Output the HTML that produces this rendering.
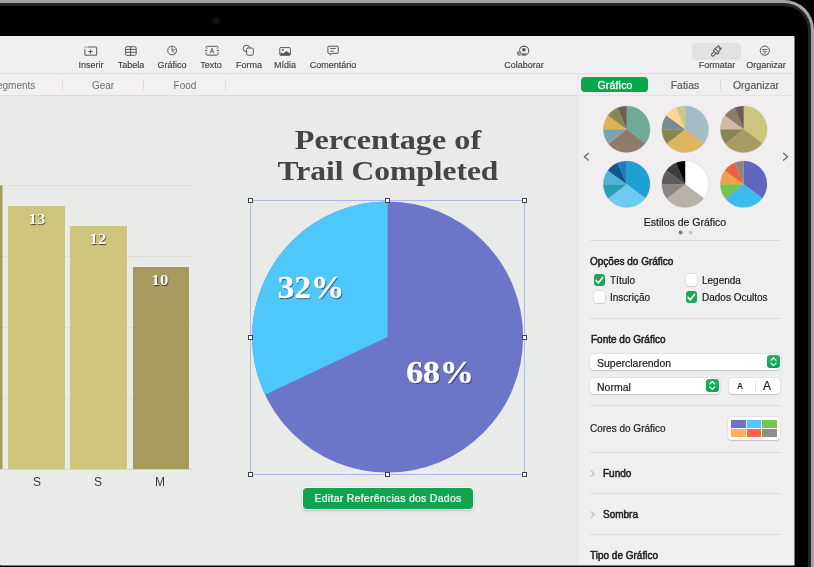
<!DOCTYPE html>
<html><head><meta charset="utf-8"><style>
html,body{margin:0;padding:0}
body{width:814px;height:567px;overflow:hidden;background:#000;position:relative;font-family:"Liberation Sans",sans-serif}
.a{position:absolute}
.t{position:absolute;white-space:nowrap;line-height:1;will-change:transform}
svg{position:absolute;left:0;top:0}
</style></head><body>
<div class="a" style="left:-200px;top:0;width:1014px;height:800px;border-radius:30px;background:linear-gradient(#aeaeb2 0,#9c9ca0 1.5px,#aaaaae 3px,#a4a4a8 40px)"></div>
<div class="a" style="left:-200px;top:3px;width:1010.5px;height:800px;border-radius:27px;background:#242526"></div>
<div class="a" style="left:-200px;top:6px;width:1007.8px;height:800px;border-radius:24px;background:#000"></div>
<div class="a" style="left:212px;top:16.5px;width:8px;height:8px;border-radius:50%;background:#0d0d0d"></div>
<div class="a" style="left:214.5px;top:19px;width:3px;height:3px;border-radius:50%;background:#151822"></div>
<div class="a" style="left:0;top:36px;width:793.5px;height:528.6px;background:#e9ebe8;box-shadow:0.5px 0.5px 0 #f6f6f6"></div>
<div class="a" style="left:0;top:36px;width:793.5px;height:37px;background:#eff0f2;border-bottom:1px solid #dcdcde"></div>
<div class="a" style="left:0;top:74px;width:577px;height:21px;background:#f3f0f1;border-bottom:1px solid #dedcdc"></div>
<div class="a" style="left:576.5px;top:74px;width:216px;height:490.6px;background:#f1eeef;border-left:1px solid #e6e3e4"></div>
<div class="a" style="left:577px;top:95px;width:216.5px;height:1px;background:#e4e1e2"></div>
<div class="a" style="left:692px;top:42.5px;width:48.5px;height:17.5px;border-radius:4px;background:#e2e2e4"></div>
<div class="t" style="left:90.9px;top:60.88px;font-size:9px;color:#3f3f3f;font-family:'Liberation Sans', sans-serif;font-weight:400;transform:translateX(-50%);-webkit-text-stroke:0.15px #3f3f3f;">Inserir</div>
<div class="t" style="left:130.9px;top:60.88px;font-size:9px;color:#3f3f3f;font-family:'Liberation Sans', sans-serif;font-weight:400;transform:translateX(-50%);-webkit-text-stroke:0.15px #3f3f3f;">Tabela</div>
<div class="t" style="left:172.2px;top:60.88px;font-size:9px;color:#3f3f3f;font-family:'Liberation Sans', sans-serif;font-weight:400;transform:translateX(-50%);-webkit-text-stroke:0.15px #3f3f3f;">Gráfico</div>
<div class="t" style="left:211.4px;top:60.88px;font-size:9px;color:#3f3f3f;font-family:'Liberation Sans', sans-serif;font-weight:400;transform:translateX(-50%);-webkit-text-stroke:0.15px #3f3f3f;">Texto</div>
<div class="t" style="left:248.5px;top:60.88px;font-size:9px;color:#3f3f3f;font-family:'Liberation Sans', sans-serif;font-weight:400;transform:translateX(-50%);-webkit-text-stroke:0.15px #3f3f3f;">Forma</div>
<div class="t" style="left:285.4px;top:60.88px;font-size:9px;color:#3f3f3f;font-family:'Liberation Sans', sans-serif;font-weight:400;transform:translateX(-50%);-webkit-text-stroke:0.15px #3f3f3f;">Mídia</div>
<div class="t" style="left:332.7px;top:60.88px;font-size:9px;color:#3f3f3f;font-family:'Liberation Sans', sans-serif;font-weight:400;transform:translateX(-50%);-webkit-text-stroke:0.15px #3f3f3f;">Comentário</div>
<div class="t" style="left:524.2px;top:60.88px;font-size:9px;color:#3f3f3f;font-family:'Liberation Sans', sans-serif;font-weight:400;transform:translateX(-50%);-webkit-text-stroke:0.15px #3f3f3f;">Colaborar</div>
<div class="t" style="left:716.7px;top:60.88px;font-size:9px;color:#3f3f3f;font-family:'Liberation Sans', sans-serif;font-weight:400;transform:translateX(-50%);-webkit-text-stroke:0.15px #3f3f3f;">Formatar</div>
<div class="t" style="left:765.5px;top:60.88px;font-size:9px;color:#3f3f3f;font-family:'Liberation Sans', sans-serif;font-weight:400;transform:translateX(-50%);-webkit-text-stroke:0.15px #3f3f3f;">Organizar</div>
<svg width="814" height="567" fill="none" stroke="#555555" stroke-width="1">
<path d="M84.9 49.3v5.9h11.8v-7.4a0.8 0.8 0 0 0-0.8-0.8h-8.6 M90.5 49.3v4.4 M88.3 51.5h4.4"/><path d="M84.9 48.3v-1.3h1.6" stroke="#9a9a9a"/>
<rect x="125.4" y="46.7" width="10.8" height="8.6" rx="1.6"/>
<path d="M125.4 49.4h10.8 M125.4 52.3h10.8 M130.6 46.7v8.6"/>
<circle cx="172.1" cy="50.5" r="4.4"/>
<path d="M172 46.2v4.4l2.9 2.9 M172.1 50.5l3-1.3" stroke-width="0.9"/>
<path d="M206.1 48.6v-1a1.3 1.3 0 0 1 1.3-1.3h9.3a1.3 1.3 0 0 1 1.3 1.3v1 M206.1 52.3v1.6a1.3 1.3 0 0 0 1.3 1.3h9.3a1.3 1.3 0 0 0 1.3-1.3v-1.6 M205 50.5h1.9 M217.1 50.5h1.9"/>
<path d="M210.1 53.3l1.9-5.2 1.9 5.2 M210.8 51.6h2.4" stroke-width="0.8"/>
<circle cx="246.5" cy="48.5" r="3.3"/>
<rect x="246.6" y="48" width="6.7" height="7.2" rx="1.4" fill="#eff0f2"/>
<rect x="279.8" y="47.6" width="10.6" height="7.6" rx="0.8"/>
<circle cx="282.8" cy="50.1" r="1" fill="#555555" stroke="none"/>
<path d="M280 55.2v-1.3l1.8-1.3 1.3 0.8 3.5-2.5 3.6 2.8v1.5z" fill="#555555" stroke="none"/>
<path d="M328.9 46.2h8.3a1 1 0 0 1 1 1v5.2a1 1 0 0 1-1 1h-5.3l-1.6 1.7v-1.7h-1.4a1 1 0 0 1-1-1v-5.2a1 1 0 0 1 1-1z" stroke-linejoin="round"/>
<path d="M330.2 48.5h5.5 M330.2 51.2h3.6" stroke-width="0.9"/>
<circle cx="524.1" cy="50.7" r="4.6" stroke-width="1.05"/>
<circle cx="523.9" cy="49.8" r="1.8" fill="#555555" stroke="none"/>
<path d="M521.8 55.3v-1.3c0.6-0.9 4.2-0.9 5.2 0z" fill="#555555" stroke="none"/>
<circle cx="519.3" cy="53.4" r="2.9" fill="#eff0f2" stroke="none"/>
<circle cx="519.3" cy="53.4" r="1.9" stroke-width="1"/>
<path d="M519.3 52.5v1.8 M518.4 53.4h1.8" stroke-width="0.7"/>
<circle cx="764.8" cy="50.7" r="4.6"/>
<path d="M762 49.5h5.6 M762.6 51.3h4.4 M763.6 53h2.4" stroke-width="0.8"/>
<g transform="translate(716.2 51.4) rotate(45)" stroke-linejoin="round">
<path d="M-2.8 -1.2h5.6v2.4h-5.6z"/>
<path d="M-2.8 -1.2l0.6-4.6h0.8l1.4 1.5 0.9-1.5h0.5l0.5 4.6"/>
<path d="M-1.3 1.2v3.6a1.3 1.3 0 0 0 2.6 0v-3.6"/>
</g>
</svg>
<div class="a" style="left:62px;top:79px;width:1px;height:12px;background:#e0dcdd"></div>
<div class="a" style="left:143.3px;top:79px;width:1px;height:12px;background:#e0dcdd"></div>
<div class="a" style="left:224.5px;top:79px;width:1px;height:12px;background:#e0dcdd"></div>
<div class="t" style="left:-3.5px;top:80.73px;font-size:10px;color:#707070;font-family:'Liberation Sans', sans-serif;font-weight:400;">egments</div>
<div class="t" style="left:103px;top:80.73px;font-size:10px;color:#707070;font-family:'Liberation Sans', sans-serif;font-weight:400;transform:translateX(-50%);">Gear</div>
<div class="t" style="left:184.5px;top:80.73px;font-size:10px;color:#707070;font-family:'Liberation Sans', sans-serif;font-weight:400;transform:translateX(-50%);">Food</div>
<div class="a" style="left:580.5px;top:76.5px;width:67px;height:15.5px;border-radius:4px;background:#0aa54d"></div>
<div class="t" style="left:614.5px;top:79.71px;font-size:10.5px;color:#fff;font-family:'Liberation Sans', sans-serif;font-weight:400;transform:translateX(-50%);letter-spacing:0.2px;-webkit-text-stroke:0.3px #fff;">Gráfico</div>
<div class="t" style="left:685px;top:79.71px;font-size:10.5px;color:#555;font-family:'Liberation Sans', sans-serif;font-weight:400;transform:translateX(-50%);-webkit-text-stroke:0.15px #555;">Fatias</div>
<div class="t" style="left:756px;top:79.71px;font-size:10.5px;color:#555;font-family:'Liberation Sans', sans-serif;font-weight:400;transform:translateX(-50%);-webkit-text-stroke:0.15px #555;">Organizar</div>
<div class="a" style="left:720px;top:79px;width:1px;height:11px;background:#dcd9da"></div>
<svg width="814" height="567"><circle cx="626.7" cy="129.3" r="23.8" fill="#d9d5d5"/><path d="M626.70 129.30L626.70 106.00A23.3 23.3 0 0 1 645.31 143.32Z" fill="#6fa998"/><path d="M626.70 129.30L645.31 143.32A23.3 23.3 0 0 1 608.34 143.64Z" fill="#8e7b6c"/><path d="M626.70 129.30L608.34 143.64A23.3 23.3 0 0 1 603.40 129.30Z" fill="#7ea2b0"/><path d="M626.70 129.30L603.40 129.30A23.3 23.3 0 0 1 607.85 115.60Z" fill="#dcb457"/><path d="M626.70 129.30L607.85 115.60A23.3 23.3 0 0 1 617.60 107.85Z" fill="#87874f"/><path d="M626.70 129.30L617.60 107.85A23.3 23.3 0 0 1 626.70 106.00Z" fill="#6b5e54"/><circle cx="685.2" cy="129.3" r="23.8" fill="#d9d5d5"/><path d="M685.20 129.30L685.20 106.00A23.3 23.3 0 0 1 703.81 143.32Z" fill="#a3bcc6"/><path d="M685.20 129.30L703.81 143.32A23.3 23.3 0 0 1 666.84 143.64Z" fill="#ddb661"/><path d="M685.20 129.30L666.84 143.64A23.3 23.3 0 0 1 661.90 129.30Z" fill="#878650"/><path d="M685.20 129.30L661.90 129.30A23.3 23.3 0 0 1 666.35 115.60Z" fill="#768b93"/><path d="M685.20 129.30L666.35 115.60A23.3 23.3 0 0 1 676.10 107.85Z" fill="#fdd88a"/><path d="M685.20 129.30L676.10 107.85A23.3 23.3 0 0 1 685.20 106.00Z" fill="#cfc784"/><circle cx="743.7" cy="129.3" r="23.8" fill="#d9d5d5"/><path d="M743.70 129.30L743.70 106.00A23.3 23.3 0 0 1 762.31 143.32Z" fill="#cbc67c"/><path d="M743.70 129.30L762.31 143.32A23.3 23.3 0 0 1 725.34 143.64Z" fill="#a59c62"/><path d="M743.70 129.30L725.34 143.64A23.3 23.3 0 0 1 720.40 129.30Z" fill="#878650"/><path d="M743.70 129.30L720.40 129.30A23.3 23.3 0 0 1 724.85 115.60Z" fill="#d3b8a6"/><path d="M743.70 129.30L724.85 115.60A23.3 23.3 0 0 1 734.60 107.85Z" fill="#8e7b6c"/><path d="M743.70 129.30L734.60 107.85A23.3 23.3 0 0 1 743.70 106.00Z" fill="#6b5e54"/><circle cx="626.7" cy="184.2" r="23.8" fill="#d9d5d5"/><path d="M626.70 184.20L626.70 160.90A23.3 23.3 0 0 1 645.31 198.22Z" fill="#1f9fd3"/><path d="M626.70 184.20L645.31 198.22A23.3 23.3 0 0 1 608.34 198.54Z" fill="#6ccbef"/><path d="M626.70 184.20L608.34 198.54A23.3 23.3 0 0 1 603.40 184.20Z" fill="#25a0b5"/><path d="M626.70 184.20L603.40 184.20A23.3 23.3 0 0 1 607.85 170.50Z" fill="#4fb3e0"/><path d="M626.70 184.20L607.85 170.50A23.3 23.3 0 0 1 617.60 162.75Z" fill="#14548a"/><path d="M626.70 184.20L617.60 162.75A23.3 23.3 0 0 1 626.70 160.90Z" fill="#1a7dc0"/><circle cx="685.2" cy="184.2" r="23.8" fill="#d9d5d5"/><path d="M685.20 184.20L685.20 160.90A23.3 23.3 0 0 1 703.81 198.22Z" fill="#ffffff"/><path d="M685.20 184.20L703.81 198.22A23.3 23.3 0 0 1 666.84 198.54Z" fill="#b8b2ab"/><path d="M685.20 184.20L666.84 198.54A23.3 23.3 0 0 1 661.90 184.20Z" fill="#8a8580"/><path d="M685.20 184.20L661.90 184.20A23.3 23.3 0 0 1 666.35 170.50Z" fill="#5d5d5d"/><path d="M685.20 184.20L666.35 170.50A23.3 23.3 0 0 1 676.10 162.75Z" fill="#3d3d3d"/><path d="M685.20 184.20L676.10 162.75A23.3 23.3 0 0 1 685.20 160.90Z" fill="#000000"/><circle cx="743.7" cy="184.2" r="23.8" fill="#d9d5d5"/><path d="M743.70 184.20L743.70 160.90A23.3 23.3 0 0 1 762.31 198.22Z" fill="#5f66bd"/><path d="M743.70 184.20L762.31 198.22A23.3 23.3 0 0 1 725.34 198.54Z" fill="#3dbaee"/><path d="M743.70 184.20L725.34 198.54A23.3 23.3 0 0 1 720.40 184.20Z" fill="#73c44f"/><path d="M743.70 184.20L720.40 184.20A23.3 23.3 0 0 1 724.85 170.50Z" fill="#eea24a"/><path d="M743.70 184.20L724.85 170.50A23.3 23.3 0 0 1 734.60 162.75Z" fill="#ee6040"/><path d="M743.70 184.20L734.60 162.75A23.3 23.3 0 0 1 743.70 160.90Z" fill="#8b8885"/><path d="M588.8 153L584.4 156.7L588.8 160.4 M783.2 153L787.6 156.7L783.2 160.4" fill="none" stroke="#6a6a6a" stroke-width="1.3"/><circle cx="680.6" cy="232.4" r="2" fill="#7a7a7a"/><circle cx="690.8" cy="232.4" r="2" fill="#c8c6c6"/></svg>
<div class="t" style="left:685px;top:217.21px;font-size:10.5px;color:#1c1c1c;font-family:'Liberation Sans', sans-serif;font-weight:400;transform:translateX(-50%);-webkit-text-stroke:0.2px #1c1c1c;">Estilos de Gráfico</div>
<div class="a" style="left:590px;top:240px;width:191px;height:1px;background:#dcdada"></div>
<div class="a" style="left:590px;top:318px;width:191px;height:1px;background:#dcdada"></div>
<div class="a" style="left:590px;top:405px;width:191px;height:1px;background:#dcdada"></div>
<div class="a" style="left:590px;top:452px;width:191px;height:1px;background:#dcdada"></div>
<div class="a" style="left:590px;top:493px;width:191px;height:1px;background:#dcdada"></div>
<div class="a" style="left:590px;top:534px;width:191px;height:1px;background:#dcdada"></div>
<div class="t" style="left:590px;top:257.14px;font-size:10px;color:#1e1e1e;font-family:'Liberation Sans', sans-serif;font-weight:400;-webkit-text-stroke:0.5px #1e1e1e;">Opções do Gráfico</div>
<div class="a" style="left:593.6px;top:274.4px;width:11.5px;height:11.5px;border-radius:3px;background:#16a956"></div>
<svg width="814" height="567"><path d="M596.1 280.4l2.3 2.6 4.3-5.6" fill="none" stroke="#fff" stroke-width="1.6" stroke-linecap="round" stroke-linejoin="round"/></svg>
<div class="a" style="left:685.5px;top:274.4px;width:11.5px;height:11.5px;border-radius:3px;background:#fff;box-shadow:0 0 0 0.5px #d0cdcd,0 0.5px 1px rgba(0,0,0,.15)"></div>
<div class="a" style="left:593.6px;top:291.3px;width:11.5px;height:11.5px;border-radius:3px;background:#fff;box-shadow:0 0 0 0.5px #d0cdcd,0 0.5px 1px rgba(0,0,0,.15)"></div>
<div class="a" style="left:685.5px;top:291.3px;width:11.5px;height:11.5px;border-radius:3px;background:#16a956"></div>
<svg width="814" height="567"><path d="M688.0 297.3l2.3 2.6 4.3-5.6" fill="none" stroke="#fff" stroke-width="1.6" stroke-linecap="round" stroke-linejoin="round"/></svg>
<div class="t" style="left:610px;top:276.14px;font-size:10px;color:#1c1c1c;font-family:'Liberation Sans', sans-serif;font-weight:400;-webkit-text-stroke:0.2px #1c1c1c;">Título</div>
<div class="t" style="left:701.5px;top:276.14px;font-size:10px;color:#1c1c1c;font-family:'Liberation Sans', sans-serif;font-weight:400;-webkit-text-stroke:0.2px #1c1c1c;">Legenda</div>
<div class="t" style="left:610px;top:293.14px;font-size:10px;color:#1c1c1c;font-family:'Liberation Sans', sans-serif;font-weight:400;-webkit-text-stroke:0.2px #1c1c1c;">Inscrição</div>
<div class="t" style="left:701.5px;top:293.14px;font-size:10px;color:#1c1c1c;font-family:'Liberation Sans', sans-serif;font-weight:400;-webkit-text-stroke:0.2px #1c1c1c;">Dados Ocultos</div>
<div class="t" style="left:590.5px;top:335.14px;font-size:10px;color:#1e1e1e;font-family:'Liberation Sans', sans-serif;font-weight:400;-webkit-text-stroke:0.5px #1e1e1e;">Fonte do Gráfico</div>
<div class="a" style="left:590px;top:354px;width:191px;height:15.8px;border-radius:4px;background:#fff;box-shadow:0 0.5px 1.5px rgba(0,0,0,.18),0 0 0 0.5px rgba(0,0,0,.05)"></div>
<div class="a" style="left:767px;top:355.4px;width:13px;height:12.8px;border-radius:3px;background:linear-gradient(#22b266,#0ea451)"></div>
<svg width="814" height="567"><path d="M771 360.4l2.5-2.5 2.5 2.5 M771 363.2l2.5 2.5 2.5-2.5" fill="none" stroke="#fff" stroke-width="1.1" stroke-linecap="round" stroke-linejoin="round"/></svg>
<div class="t" style="left:597px;top:357.71px;font-size:10.5px;color:#1c1c1c;font-family:'Liberation Sans', sans-serif;font-weight:400;-webkit-text-stroke:0.2px #1c1c1c;">Superclarendon</div>
<div class="a" style="left:590px;top:378px;width:130px;height:16px;border-radius:4px;background:#fff;box-shadow:0 0.5px 1.5px rgba(0,0,0,.18),0 0 0 0.5px rgba(0,0,0,.05)"></div>
<div class="a" style="left:705.8px;top:379px;width:13px;height:12.8px;border-radius:3px;background:linear-gradient(#22b266,#0ea451)"></div>
<svg width="814" height="567"><path d="M709.8 384l2.5-2.5 2.5 2.5 M709.8 386.8l2.5 2.5 2.5-2.5" fill="none" stroke="#fff" stroke-width="1.1" stroke-linecap="round" stroke-linejoin="round"/></svg>
<div class="t" style="left:597.3px;top:381.71px;font-size:10.5px;color:#1c1c1c;font-family:'Liberation Sans', sans-serif;font-weight:400;-webkit-text-stroke:0.2px #1c1c1c;">Normal</div>
<div class="a" style="left:728.5px;top:378px;width:51px;height:16px;border-radius:4px;background:#fff;box-shadow:0 0.5px 1.5px rgba(0,0,0,.18),0 0 0 0.5px rgba(0,0,0,.05)"></div>
<div class="a" style="left:754.5px;top:381px;width:1px;height:10px;background:#e3e1e1"></div>
<div class="t" style="left:740.3px;top:382.30px;font-size:8.5px;color:#1c1c1c;font-family:'Liberation Sans', sans-serif;font-weight:700;transform:translateX(-50%);">A</div>
<div class="t" style="left:766.6px;top:379.64px;font-size:12px;color:#1c1c1c;font-family:'Liberation Sans', sans-serif;font-weight:400;transform:translateX(-50%);-webkit-text-stroke:0.2px #1c1c1c;">A</div>
<div class="t" style="left:590px;top:424.14px;font-size:10px;color:#1c1c1c;font-family:'Liberation Sans', sans-serif;font-weight:400;-webkit-text-stroke:0.2px #1c1c1c;">Cores do Gráfico</div>
<div class="a" style="left:727.7px;top:417.3px;width:52.5px;height:22.8px;border-radius:4px;background:#fff;box-shadow:0 0.5px 1.5px rgba(0,0,0,.18),0 0 0 0.5px rgba(0,0,0,.05)"></div>
<div class="a" style="left:730.7px;top:420.1px;width:15.1px;height:7.9px;background:#6c72c7"></div>
<div class="a" style="left:747.1px;top:420.1px;width:14px;height:7.9px;background:#4cc9fa"></div>
<div class="a" style="left:762.1px;top:420.1px;width:14.8px;height:7.9px;background:#72c54f"></div>
<div class="a" style="left:730.7px;top:428.9px;width:15.1px;height:7.9px;background:#ffb05a"></div>
<div class="a" style="left:747.1px;top:428.9px;width:14px;height:7.9px;background:#ff6446"></div>
<div class="a" style="left:762.1px;top:428.9px;width:14.8px;height:7.9px;background:#8f8d88"></div>
<svg width="814" height="567"><path d="M591 470.5l3 3-3 3 M591 511.5l3 3-3 3" fill="none" stroke="#9a9a9a" stroke-width="1"/></svg>
<div class="t" style="left:602.6px;top:469.44px;font-size:10px;color:#1e1e1e;font-family:'Liberation Sans', sans-serif;font-weight:400;-webkit-text-stroke:0.5px #1e1e1e;">Fundo</div>
<div class="t" style="left:602.6px;top:510.33px;font-size:10px;color:#1e1e1e;font-family:'Liberation Sans', sans-serif;font-weight:400;-webkit-text-stroke:0.5px #1e1e1e;">Sombra</div>
<div class="t" style="left:590px;top:551.13px;font-size:10px;color:#1e1e1e;font-family:'Liberation Sans', sans-serif;font-weight:400;-webkit-text-stroke:0.5px #1e1e1e;">Tipo de Gráfico</div>
<svg width="814" height="567"><path d="M0 185.5H192" stroke="#c9cac8" stroke-width="1" stroke-dasharray="1 1.6"/><path d="M0 256.5H192" stroke="#c9cac8" stroke-width="1" stroke-dasharray="1 1.6"/><path d="M0 327.5H192" stroke="#c9cac8" stroke-width="1" stroke-dasharray="1 1.6"/><path d="M0 398.5H192" stroke="#c9cac8" stroke-width="1" stroke-dasharray="1 1.6"/><rect x="0" y="185.5" width="2.5" height="283.5" fill="#a59b5e"/><rect x="8" y="206" width="57" height="263" fill="#cdc67c"/><rect x="70" y="226" width="57" height="243" fill="#cdc67c"/><rect x="133" y="267" width="56" height="202" fill="#a59b5e"/><path d="M0 469.5H192" stroke="#d2d3d1" stroke-width="1"/></svg>
<div class="t" style="left:36.5px;top:211.84px;font-size:15px;color:#fff;font-family:'Liberation Serif', serif;font-weight:700;transform:translateX(-50%) scaleX(1.12);text-shadow:0.5px 1px 1px rgba(0,0,0,.7);">13</div>
<div class="t" style="left:98.3px;top:232.04px;font-size:15px;color:#fff;font-family:'Liberation Serif', serif;font-weight:700;transform:translateX(-50%) scaleX(1.12);text-shadow:0.5px 1px 1px rgba(0,0,0,.7);">12</div>
<div class="t" style="left:160.4px;top:272.54px;font-size:15px;color:#fff;font-family:'Liberation Serif', serif;font-weight:700;transform:translateX(-50%) scaleX(1.12);text-shadow:0.5px 1px 1px rgba(0,0,0,.7);">10</div>
<div class="t" style="left:36.5px;top:475.84px;font-size:12px;color:#3a3a3a;font-family:'Liberation Sans', sans-serif;font-weight:400;transform:translateX(-50%);">S</div>
<div class="t" style="left:98.3px;top:475.84px;font-size:12px;color:#3a3a3a;font-family:'Liberation Sans', sans-serif;font-weight:400;transform:translateX(-50%);">S</div>
<div class="t" style="left:160.4px;top:475.84px;font-size:12px;color:#3a3a3a;font-family:'Liberation Sans', sans-serif;font-weight:400;transform:translateX(-50%);">M</div>
<div class="t" style="left:387.5px;top:125.75px;font-size:28px;color:#454545;font-family:'Liberation Serif', serif;font-weight:700;transform:translateX(-50%) scaleX(1.15);">Percentage of</div>
<div class="t" style="left:387.5px;top:157.15px;font-size:28px;color:#454545;font-family:'Liberation Serif', serif;font-weight:700;transform:translateX(-50%) scaleX(1.125);">Trail Completed</div>
<svg width="814" height="567"><circle cx="387.6" cy="337" r="135.5" fill="#6c75c8"/><path d="M387.60 337.00L265.00 394.69A135.5 135.5 0 0 1 387.60 201.50Z" fill="#4ec8fa"/><rect x="250.5" y="200.5" width="274" height="274" fill="none" stroke="#a7b9f0" stroke-width="1"/><rect x="248.5" y="198.5" width="4" height="4" fill="#fff" stroke="#444" stroke-width="1"/><rect x="248.5" y="335.5" width="4" height="4" fill="#fff" stroke="#444" stroke-width="1"/><rect x="248.5" y="472.5" width="4" height="4" fill="#fff" stroke="#444" stroke-width="1"/><rect x="385.5" y="198.5" width="4" height="4" fill="#fff" stroke="#444" stroke-width="1"/><rect x="385.5" y="472.5" width="4" height="4" fill="#fff" stroke="#444" stroke-width="1"/><rect x="522.5" y="198.5" width="4" height="4" fill="#fff" stroke="#444" stroke-width="1"/><rect x="522.5" y="335.5" width="4" height="4" fill="#fff" stroke="#444" stroke-width="1"/><rect x="522.5" y="472.5" width="4" height="4" fill="#fff" stroke="#444" stroke-width="1"/></svg>
<div class="t" style="left:310.5px;top:273.06px;font-size:30.5px;color:#fff;font-family:'Liberation Serif', serif;font-weight:700;transform:translateX(-50%) scaleX(1.09);text-shadow:0.6px 1.3px 1px rgba(0,0,0,.7);-webkit-text-stroke:0.4px #fff;">32%</div>
<div class="t" style="left:440px;top:356.64px;font-size:31px;color:#fff;font-family:'Liberation Serif', serif;font-weight:700;transform:translateX(-50%) scaleX(1.09);text-shadow:0.6px 1.3px 1px rgba(0,0,0,.7);-webkit-text-stroke:0.4px #fff;">68%</div>
<div class="a" style="left:302.8px;top:487.7px;width:170.5px;height:21.6px;border-radius:4px;background:#0ea54e;box-shadow:0 0 0 1px rgba(255,255,255,.75),0 1px 2.5px 1px rgba(0,0,0,.18)"></div>
<div class="t" style="left:388px;top:492.51px;font-size:10.5px;color:#fff;font-family:'Liberation Sans', sans-serif;font-weight:400;transform:translateX(-50%);letter-spacing:0.27px;-webkit-text-stroke:0.2px #fff;">Editar Referências dos Dados</div>
</body></html>
